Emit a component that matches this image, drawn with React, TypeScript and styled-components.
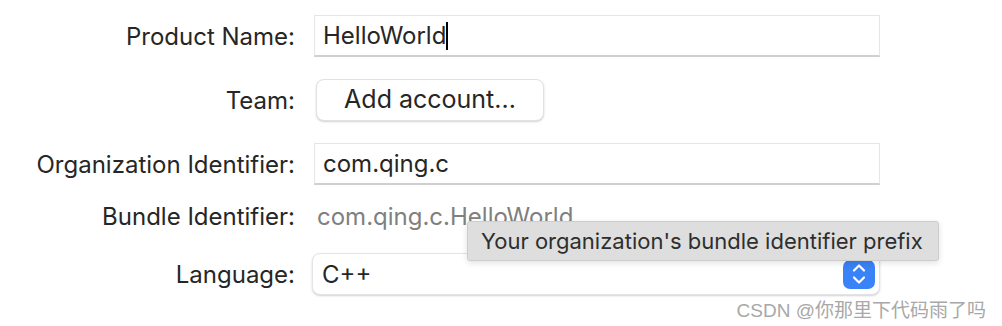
import React from "react";
import styled, { createGlobalStyle } from "styled-components";

const Global = createGlobalStyle`
  html, body { margin: 0; padding: 0; background: #ffffff; }
  body { font-family: Inter, "Noto Sans", sans-serif; color: #262626; }
`;

const Page = styled.div`
  position: relative;
  width: 1002px;
  height: 326px;
  box-sizing: border-box;
  padding-top: 15px;
  overflow: hidden;
`;

const Form = styled.div`
  display: grid;
  grid-template-columns: 295px 566px;
  grid-template-rows: 42px 42px 42px 24px 42px;
  column-gap: 19px;
  row-gap: 22px;
  align-items: center;
`;

const Label = styled.div<{ $lift?: number }>`
  text-align: right;
  font-size: 24px;
  color: #262626;
  white-space: nowrap;
  margin-bottom: ${(p) => (p.$lift ? `${p.$lift * 2}px` : "0")};
`;

const TextField = styled.div`
  box-sizing: border-box;
  height: 42px;
  display: flex;
  align-items: center;
  padding-left: 8px;
  background: #ffffff;
  border: 1px solid #e6e6e6;
  border-bottom: 2px solid #cfcfcf;
  font-size: 24px;
  color: #262626;
`;

const Caret = styled.span`
  display: inline-block;
  width: 2px;
  height: 28px;
  background: #000;
  margin-left: 0px;
`;

const PushButton = styled.button`
  box-sizing: border-box;
  justify-self: start;
  margin-left: 2px;
  width: 228px;
  height: 42px;
  background: #ffffff;
  border: 1px solid #e2e2e2;
  border-radius: 8px;
  box-shadow: 0 1px 2px rgba(0, 0, 0, 0.18);
  font-family: inherit;
  font-size: 25px;
  color: #262626;
  padding: 0 0 2px 0;
`;

const StaticValue = styled.div`
  font-size: 24px;
  color: #808080;
  padding-left: 3px;
  margin-bottom: 6px;
  white-space: nowrap;
`;

const Popup = styled.div`
  box-sizing: border-box;
  margin-left: -2px;
  height: 42px;
  display: flex;
  align-items: center;
  justify-content: space-between;
  padding: 0 4px 0 9px;
  background: #ffffff;
  border: 1px solid #e4e4e4;
  border-radius: 8px;
  box-shadow: 0 1px 2px rgba(0, 0, 0, 0.18);
  font-size: 24px;
  color: #262626;
`;

const Stepper = styled.div`
  width: 32px;
  height: 29px;
  border-radius: 7px;
  background: #3a82f7;
  display: flex;
  align-items: center;
  justify-content: center;
`;

const Tooltip = styled.div`
  position: absolute;
  left: 467px;
  top: 221px;
  box-sizing: border-box;
  width: 472px;
  height: 40px;
  padding-left: 13px;
  display: flex;
  align-items: center;
  background: #dedede;
  border: 1px solid #cdcdcd;
  border-radius: 3px;
  box-shadow: 0 2px 6px rgba(0, 0, 0, 0.12);
  font-size: 22px;
  color: #2e2e2e;
  white-space: nowrap;
`;

const Watermark = styled.div`
  position: absolute;
  right: 16px;
  bottom: 4px;
  font-family: "Liberation Sans", "Noto Sans CJK SC", sans-serif;
  font-size: 19px;
  color: #a8a8a8;
  white-space: nowrap;
`;

export default function App() {
  return (
    <Page>
      <Global />
      <Form>
        <Label>Product Name:</Label>
        <TextField>
          HelloWorld
          <Caret />
        </TextField>

        <Label>Team:</Label>
        <PushButton>Add account...</PushButton>

        <Label>Organization Identifier:</Label>
        <TextField>com.qing.c</TextField>

        <Label $lift={3}>Bundle Identifier:</Label>
        <StaticValue>com.qing.c.HelloWorld</StaticValue>

        <Label>Language:</Label>
        <Popup>
          C++
          <Stepper>
            <svg width="16" height="24" viewBox="0 0 16 24" fill="none">
              <path d="M3 8.5 L8 3.5 L13 8.5" stroke="#fff" strokeWidth="2.2" strokeLinecap="round" strokeLinejoin="round" />
              <path d="M3 15.5 L8 20.5 L13 15.5" stroke="#fff" strokeWidth="2.2" strokeLinecap="round" strokeLinejoin="round" />
            </svg>
          </Stepper>
        </Popup>
      </Form>
      <Tooltip>Your organization's bundle identifier prefix</Tooltip>
      <Watermark>CSDN @你那里下代码雨了吗</Watermark>
    </Page>
  );
}
